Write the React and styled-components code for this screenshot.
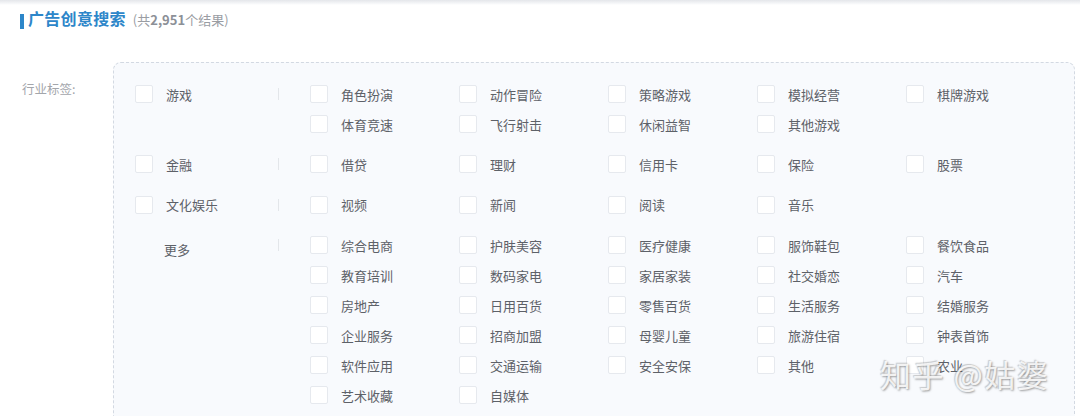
import React from 'react';
import styled, { createGlobalStyle } from 'styled-components';

const Global = createGlobalStyle`
  html, body {
    margin: 0;
    padding: 0;
    background: #ffffff;
    font-family: "Noto Sans CJK SC", "Noto Sans", sans-serif;
    overflow: hidden;
  }
`;

const Page = styled.div`
  position: relative;
  width: 1080px;
  height: 416px;
  overflow: hidden;
  background: #ffffff;
`;

const TopShade = styled.div`
  height: 5px;
  background: linear-gradient(#e4e6ea, #f6f7f9 70%, #ffffff);
`;

const Header = styled.div`
  display: flex;
  align-items: baseline;
  padding: 1px 0 0 20px;
  height: 30px;
`;

const Bar = styled.span`
  display: inline-block;
  width: 4px;
  height: 15px;
  background: #2d86c9;
  margin-right: 4px;
  align-self: center;
`;

const Title = styled.h2`
  margin: 0;
  font-size: 16px;
  font-weight: 700;
  color: #2d86c9;
  letter-spacing: 0.3px;
`;

const Count = styled.span`
  margin-left: 7px;
  font-size: 13px;
  color: #9a9da3;
  b {
    color: #8c9097;
    font-weight: 700;
  }
`;

const Body = styled.div`
  display: flex;
  padding-top: 26px;
`;

const SideLabel = styled.div`
  width: 113px;
  padding: 17px 0 0 22px;
  box-sizing: border-box;
  font-size: 12.5px;
  color: #a3a6ab;
`;

const Box = styled.div`
  width: 962px;
  height: 400px;
  box-sizing: border-box;
  border: 1px dashed #d3d9e2;
  border-radius: 8px;
  background: #f8fafd;
  padding: 16px 0 0 21px;
  display: flex;
  flex-direction: column;
  gap: 10.4px;
`;

const Group = styled.div`
  display: flex;
  align-items: flex-start;
`;

const Head = styled.div`
  width: 143px;
  height: 30px;
  display: flex;
  align-items: center;
  padding-top: ${p => (p.$plain ? '8px' : '0')};
  box-sizing: border-box;
`;

const Sep = styled.span`
  width: 1px;
  height: 12px;
  margin-top: 9px;
  margin-right: 31px;
  background: #e3e6ea;
`;

const SubGrid = styled.div`
  display: grid;
  grid-template-columns: repeat(5, 149px);
  grid-auto-rows: 30px;
`;

const Item = styled.label`
  display: flex;
  align-items: center;
  gap: 13px;
  font-size: 13px;
  color: #5d6168;
  white-space: nowrap;
`;

const Check = styled.span`
  width: 16px;
  height: 16px;
  border: 1px solid #e6e9ee;
  border-radius: 2px;
  background: #ffffff;
  flex-shrink: 0;
`;

const Spacer = styled.span`
  width: 16px;
  flex-shrink: 0;
`;

const Watermark = styled.div`
  position: absolute;
  left: 880px;
  top: 351px;
  font-size: 31px;
  color: rgba(255, 255, 255, 0.85);
  letter-spacing: 1.5px;
  text-shadow: 1px 1px 2px rgba(80, 80, 80, 0.55), -1px -1px 1px rgba(120, 120, 120, 0.35);
`;

const groups = [
  { name: '游戏', items: ['角色扮演', '动作冒险', '策略游戏', '模拟经营', '棋牌游戏', '体育竞速', '飞行射击', '休闲益智', '其他游戏'] },
  { name: '金融', items: ['借贷', '理财', '信用卡', '保险', '股票'] },
  { name: '文化娱乐', items: ['视频', '新闻', '阅读', '音乐'] },
  {
    name: '更多',
    plain: true,
    items: [
      '综合电商', '护肤美容', '医疗健康', '服饰鞋包', '餐饮食品',
      '教育培训', '数码家电', '家居家装', '社交婚恋', '汽车',
      '房地产', '日用百货', '零售百货', '生活服务', '结婚服务',
      '企业服务', '招商加盟', '母婴儿童', '旅游住宿', '钟表首饰',
      '软件应用', '交通运输', '安全安保', '其他', '农业',
      '艺术收藏', '自媒体',
    ],
  },
];

export default function App() {
  return (
    <Page>
      <Global />
      <TopShade />
      <Header>
        <Bar />
        <Title>广告创意搜索</Title>
        <Count>(共<b>2,951</b>个结果)</Count>
      </Header>
      <Body>
        <SideLabel>行业标签:</SideLabel>
        <Box>
          {groups.map(g => (
            <Group key={g.name}>
              <Head $plain={g.plain}>
                <Item>
                  {g.plain ? <Spacer /> : <Check />}
                  {g.name}
                </Item>
              </Head>
              <Sep />
              <SubGrid>
                {g.items.map(it => (
                  <Item key={it}>
                    <Check />
                    {it}
                  </Item>
                ))}
              </SubGrid>
            </Group>
          ))}
        </Box>
      </Body>
      <Watermark>知乎 @姑婆</Watermark>
    </Page>
  );
}
